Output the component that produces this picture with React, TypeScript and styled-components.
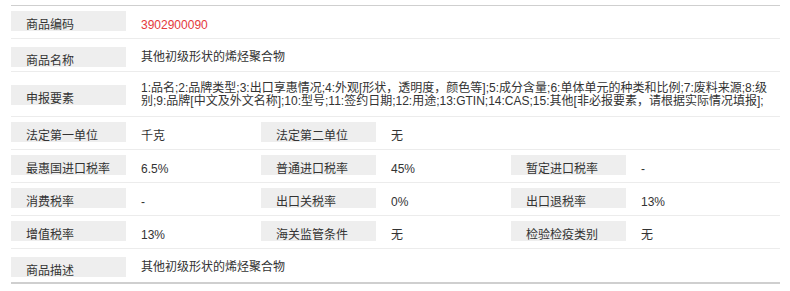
import { Fragment } from "react";
import { createGlobalStyle, styled } from "styled-components";

const GlobalStyle = createGlobalStyle`
    body {
        margin: 0;
        background: #fff;
        font-family: "Liberation Sans", "Noto Sans CJK SC", sans-serif;
        font-size: 12px;
        color: #333;
    }
`

export const Wrapper = styled.div`
    padding: 5px 10px 0 11px;
    width: 769px;
`

export const Table = styled.div`
    padding-bottom: 1px;
    border-top: 1px solid #cfcfcf;
    border-bottom: 2px solid #cfcfcf;
`

type RowKind = "pair" | "wide" | "multi";

export interface IRowProps {
    $kind: RowKind
}

const rowPadding: Record<RowKind, string> = {
    pair: "5px 0 7px",
    wide: "8px 0 4px",
    multi: "10px 0 8px",
}

export const Row = styled.div<IRowProps>`
    display: grid;
    grid-template-columns: 115px 135px 115px 135px 115px 1fr;
    align-items: ${(props) => props.$kind === "multi" ? "center" : "start"};
    padding: ${(props) => rowPadding[props.$kind]};
    border-bottom: 1px solid #ececec;

    &:last-child {
        border-bottom: none;
    }
`

export const Label = styled.div`
    height: 20px;
    padding-left: 15px;
    line-height: 28px;
    background-color: #eeeeee;
    white-space: nowrap;
`

export interface IValueProps {
    $kind: RowKind
    $span?: boolean
    $red?: boolean
}

const valueLineHeight: Record<RowKind, string> = {
    pair: "28px",
    wide: "21px",
    multi: "13px",
}

export const Value = styled.div<IValueProps>`
    grid-column: ${(props) => props.$span ? "2 / -1" : "auto"};
    height: ${(props) => props.$kind === "multi" ? "auto" : "20px"};
    padding: 0 8px 0 15px;
    line-height: ${(props) => valueLineHeight[props.$kind]};
    color: ${(props) => props.$red ? "#e4393c" : "#333"};
`

interface ICell {
    label: string
    value: string
}

interface IRow {
    kind: RowKind
    cells: ICell[]
    red?: boolean
}

const rows: IRow[] = [
    { kind: "pair", red: true, cells: [{ label: "商品编码", value: "3902900090" }] },
    { kind: "wide", cells: [{ label: "商品名称", value: "其他初级形状的烯烃聚合物" }] },
    {
        kind: "multi",
        cells: [{
            label: "申报要素",
            value: "1:品名;2:品牌类型;3:出口享惠情况;4:外观[形状，透明度，颜色等];5:成分含量;6:单体单元的种类和比例;7:废料来源;8:级别;9:品牌[中文及外文名称];10:型号;11:签约日期;12:用途;13:GTIN;14:CAS;15:其他[非必报要素，请根据实际情况填报];",
        }],
    },
    {
        kind: "pair",
        cells: [
            { label: "法定第一单位", value: "千克" },
            { label: "法定第二单位", value: "无" },
        ],
    },
    {
        kind: "pair",
        cells: [
            { label: "最惠国进口税率", value: "6.5%" },
            { label: "普通进口税率", value: "45%" },
            { label: "暂定进口税率", value: "-" },
        ],
    },
    {
        kind: "pair",
        cells: [
            { label: "消费税率", value: "-" },
            { label: "出口关税率", value: "0%" },
            { label: "出口退税率", value: "13%" },
        ],
    },
    {
        kind: "pair",
        cells: [
            { label: "增值税率", value: "13%" },
            { label: "海关监管条件", value: "无" },
            { label: "检验检疫类别", value: "无" },
        ],
    },
    { kind: "wide", cells: [{ label: "商品描述", value: "其他初级形状的烯烃聚合物" }] },
]

function App() {
    return (
        <Wrapper>
            <GlobalStyle />
            <Table>
                {rows.map((row, i) => (
                    <Row key={i} $kind={row.kind}>
                        {row.cells.map((cell) => (
                            <Fragment key={cell.label}>
                                <Label>{cell.label}</Label>
                                <Value
                                    $kind={row.kind}
                                    $span={row.cells.length === 1}
                                    $red={row.red}
                                >
                                    {cell.value}
                                </Value>
                            </Fragment>
                        ))}
                    </Row>
                ))}
            </Table>
        </Wrapper>
    );
};

export default App;
